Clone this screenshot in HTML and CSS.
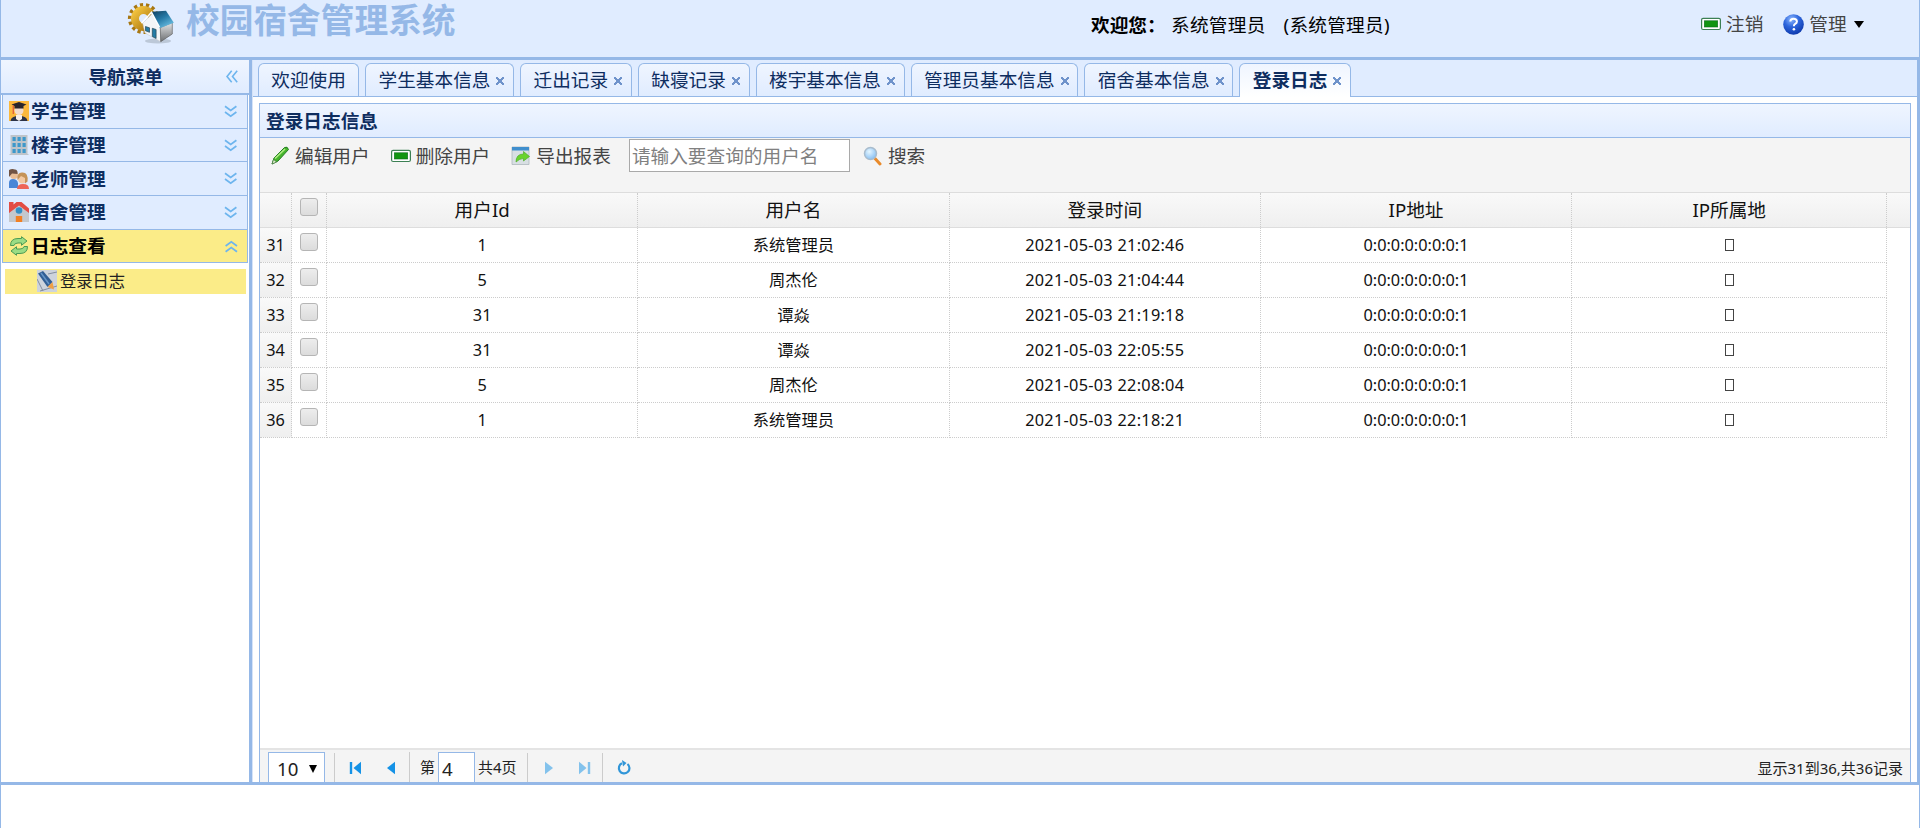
FILE: index.html
```html
<!DOCTYPE html>
<html lang="zh-CN">
<head>
<meta charset="utf-8">
<title>校园宿舍管理系统</title>
<link rel="stylesheet" href="styles.css">
</head>
<body>
<svg width="0" height="0" class="defs">
  <defs>
    <linearGradient id="gold" x1="0" y1="0" x2="1" y2="1"><stop offset="0" stop-color="#f3c43f"/><stop offset="1" stop-color="#a8730c"/></linearGradient>
    <linearGradient id="roof" x1="0" y1="0" x2=".7" y2="1"><stop offset="0" stop-color="#123e5c"/><stop offset=".5" stop-color="#2578a5"/><stop offset="1" stop-color="#6cc0e4"/></linearGradient>
    <linearGradient id="wall" x1="0" y1="0" x2="0" y2="1"><stop offset="0" stop-color="#e4e6e8"/><stop offset="1" stop-color="#6d6f72"/></linearGradient>
    <radialGradient id="ball" cx=".4" cy=".25" r=".8"><stop offset="0" stop-color="#8db8ff"/><stop offset=".45" stop-color="#2e66dc"/><stop offset="1" stop-color="#0a35a8"/></radialGradient>
    <radialGradient id="lens" cx=".4" cy=".35" r=".7"><stop offset="0" stop-color="#e5f6ff"/><stop offset="1" stop-color="#83bdf3"/></radialGradient>
    <g id="chev" fill="none" stroke="#6db5ee" stroke-width="1.7"><path d="M1 1.2l5.7 4.3 5.7-4.3M1 7l5.7 4.3L12.400 7"/></g>
    <g id="minus"><rect x=".6" y="4.300" width="18.800" height="11.200" rx="1.500" fill="#fff" stroke="#3c8054" stroke-width="1.200"/><rect x="3.300" y="6.800" width="13.400" height="6.200" fill="#119511" stroke="#0b6d20" stroke-width=".6"/></g>
  </defs>
</svg>
<div class="app">
  <header class="top">
    <svg class="logo" viewBox="0 0 48 44">
      <circle cx="17.500" cy="17.500" r="13.800" fill="none" stroke="#a87712" stroke-width="3.600" stroke-dasharray="3.200 2.900"/>
      <circle cx="17.500" cy="17.500" r="8.500" fill="none" stroke="url(#gold)" stroke-width="8"/>
      <ellipse cx="32" cy="40" rx="13" ry="2.500" fill="#bcc8d8"/>
      <path d="M16.700 22.300L26 13l8.500 13.500.2 14.200L19 32z" fill="#f3f5f7" stroke="#c2c6cb" stroke-width=".5"/>
      <path d="M34.300 26.500l12-5V33l-11.600 7.700z" fill="url(#wall)" stroke="#555" stroke-width=".6"/>
      <path d="M25.500 10.700L40 9.700l7.800 12-14.300 5.500z" fill="url(#roof)"/>
      <path d="M15.500 22.300l10-11 8 15" stroke="#fff" stroke-width="1.500" fill="none"/>
      <path d="M19.500 25.500l4 1.300v4.500l-4-1.500zM26.300 27.300l3.800 1.200v9l-3.800-2z" fill="#247ba5" stroke="#274858" stroke-width=".7"/>
    </svg>
    <h1>校园宿舍管理系统</h1>
    <div class="hello"><b>欢迎您：</b><span>系统管理员</span><span>(系统管理员)</span></div>
    <div class="account">
      <svg width="20" height="20"><use href="#minus"/></svg><span class="logout">注销</span>
      <svg width="21" height="21" viewBox="0 0 21 21"><circle cx="10.500" cy="10.500" r="10.300" fill="url(#ball)"/><path d="M7.300 7.500q.2-2.700 3.300-2.700t3.300 2.600q0 1.500-1.700 2.500-1.300.8-1.300 2.300" fill="none" stroke="#fff" stroke-width="2"/><circle cx="10.900" cy="15.300" r="1.300" fill="#fff"/></svg><span>管理</span>
      <i class="caret"></i>
    </div>
  </header>
  <div class="main">
    <aside class="side">
      <div class="side-title">导航菜单<svg class="fold" width="12" height="13"><path d="M5.700 .7L1 6.500l4.700 5.800M11.200 .7L6.500 6.500l4.700 5.800" fill="none" stroke="#6db5ee" stroke-width="1.600"/></svg></div>
      <nav class="accordion">
        <div class="acc"><svg class="ic" viewBox="0 0 20 20"><rect width="20" height="20" fill="#fbb83c"/><path d="M1.500 20q.5-5 8.500-5t8.500 5z" fill="#2b3247"/><path d="M7 14h6v4l-3 2-3-2z" fill="#f6efe9"/><circle cx="10" cy="9.500" r="4.500" fill="#f2dccd"/><path d="M2.500 3.500L10 1l7.500 2.500-3 1.500v2.500h-9V5z" fill="#29252c"/><path d="M4.300 4.500V13" stroke="#e25c3a" stroke-width="1.300"/></svg>学生管理<svg class="chev" width="14" height="13"><use href="#chev"/></svg></div>
        <div class="acc"><svg class="ic" viewBox="0 0 20 20"><path d="M1.500 0h17v19h1v1H.5v-1h1z" fill="#bec4ca"/><path d="M3.500 2h3.200v4H3.500zm5 0h3.200v4H8.500zm5 0h3.200v4h-3.200zM3.500 8h3.200v4H3.500zm5 0h3.200v4H8.500zm5 0h3.200v4h-3.200zM3.500 14h3.200v4H3.500zm5 0h3.200v4H8.500zm5 0h3.200v4h-3.200z" fill="#3d98cb"/></svg>楼宇管理<svg class="chev" width="14" height="13"><use href="#chev"/></svg></div>
        <div class="acc"><svg class="ic" viewBox="0 0 20 20"><path d="M0 19v-5q0-4 4-4t5 4v5z" fill="#4a86d6"/><circle cx="5" cy="6" r="4" fill="#e9bd95"/><path d="M0 8V1q3-1.500 6-.5 3 .5 2.500 4.500L3 4.500z" fill="#705343"/><path d="M8 20q0-5 6-5t6 5z" fill="#ee6557"/><circle cx="13.500" cy="10" r="4.500" fill="#f3c9a2"/><path d="M8.500 11q-1-8 5-7.500 6 0 5 9l-2.500 2V9l-4-2z" fill="#c59358"/></svg>老师管理<svg class="chev" width="14" height="13"><use href="#chev"/></svg></div>
        <div class="acc"><svg class="ic" viewBox="0 0 20 20"><path d="M0 20V8l10-7 10 7v12z" fill="#c3c8cd"/><path d="M0 0h4.500v2.500L7.500 0h5L20 6.500v4.500L10 3.500 0 11z" fill="#e34c43"/><circle cx="10" cy="8.500" r="3.300" fill="#348ec4"/><path d="M6.800 14h6.400v6H6.800z" fill="#f28023"/></svg>宿舍管理<svg class="chev" width="14" height="13"><use href="#chev"/></svg></div>
        <div class="acc on"><svg class="ic" viewBox="0 0 20 20"><g fill="#9adc84" stroke="#4b9b54" stroke-width="1"><path d="M1.500 9.500q0-7 7.500-7h3.500V.7L18 5l-5.500 4.300V7H9Q5.500 7 5 9.500z"/><path d="M18.500 10.500q0 7-7.500 7H7.500v1.800L2 15l5.500-4.300V13H11q3.500 0 4-2.500z"/></g></svg>日志查看<svg class="chev up" width="14" height="13"><use href="#chev"/></svg></div>
      </nav>
      <div class="leaf"><svg width="20" height="22" viewBox="0 0 20 22"><path d="M0 0h20v22H0z" fill="#cdd3dc"/><path d="M0 9l6 12M11 4l9-2M3 21l17-5" stroke="#848e9f"/><path d="M1 3.500L6 1l9.500 11-5 5z" fill="#315e94"/><path d="M4 3l8 11" stroke="#6695c7" stroke-width="1.500"/><path d="M10.500 17l5-5 1.500 7.500z" fill="#f0a044"/></svg>登录日志</div>
    </aside>
    <section class="content">
      <div class="tabs">
        <div class="tab">欢迎使用</div>
        <div class="tab x">学生基本信息<i></i></div>
        <div class="tab x">迁出记录<i></i></div>
        <div class="tab x">缺寝记录<i></i></div>
        <div class="tab x">楼宇基本信息<i></i></div>
        <div class="tab x">管理员基本信息<i></i></div>
        <div class="tab x">宿舍基本信息<i></i></div>
        <div class="tab x sel">登录日志<i></i></div>
      </div>
      <div class="panel">
        <div class="panel-title">登录日志信息</div>
        <div class="tools">
          <span class="tool"><svg width="20" height="20" viewBox="0 0 20 20"><path d="M2 18l2-6L14.500 1.500q3-1.500 4 2L8 15z" fill="#45b42c" stroke="#247d23"/><path d="M5 12.500L15 3" stroke="#b0ec83" stroke-width="1.600"/><path d="M2 18l1.600-4.500L6.500 16z" fill="#deeccd" stroke="#3d6e35" stroke-width=".6"/></svg>编辑用户</span>
          <span class="tool"><svg width="20" height="20"><use href="#minus"/></svg>删除用户</span>
          <span class="tool"><svg width="20" height="20" viewBox="0 0 20 20"><path d="M1 1h17v17.500H1z" fill="#d8dfe3" stroke="#aeb8be" stroke-width=".8"/><path d="M1 1h17v3.500H1z" fill="#3f8ecd"/><path d="M5 16q0-8 7.500-8V5.500l6 5-6 4.500v-2.500q-4 0-7.500 3.500z" fill="#68d32c" stroke="#4fae2b" stroke-width=".7"/></svg>导出报表</span>
          <input class="query" placeholder="请输入要查询的用户名">
          <span class="tool find"><svg width="20" height="20" viewBox="0 0 20 20"><path d="M12 12.500l5 5.500" stroke="#e98a2a" stroke-width="3" stroke-linecap="round"/><circle cx="7.500" cy="7.500" r="6" fill="url(#lens)" stroke="#a9bccd" stroke-width="1.500"/></svg>搜索</span>
        </div>
        <div class="grid">
          <div class="row head"><div class="no"></div><div><i class="box"></i></div><div>用户Id</div><div>用户名</div><div>登录时间</div><div>IP地址</div><div>IP所属地</div></div>
          <div class="row"><div class="no">31</div><div><i class="box"></i></div><div>1</div><div>系统管理员</div><div class="time">2021-05-03 21:02:46</div><div>0:0:0:0:0:0:0:1</div><div><i class="tofu"></i></div></div>
          <div class="row"><div class="no">32</div><div><i class="box"></i></div><div>5</div><div>周杰伦</div><div class="time">2021-05-03 21:04:44</div><div>0:0:0:0:0:0:0:1</div><div><i class="tofu"></i></div></div>
          <div class="row"><div class="no">33</div><div><i class="box"></i></div><div>31</div><div>谭焱</div><div class="time">2021-05-03 21:19:18</div><div>0:0:0:0:0:0:0:1</div><div><i class="tofu"></i></div></div>
          <div class="row"><div class="no">34</div><div><i class="box"></i></div><div>31</div><div>谭焱</div><div class="time">2021-05-03 22:05:55</div><div>0:0:0:0:0:0:0:1</div><div><i class="tofu"></i></div></div>
          <div class="row"><div class="no">35</div><div><i class="box"></i></div><div>5</div><div>周杰伦</div><div class="time">2021-05-03 22:08:04</div><div>0:0:0:0:0:0:0:1</div><div><i class="tofu"></i></div></div>
          <div class="row"><div class="no">36</div><div><i class="box"></i></div><div>1</div><div>系统管理员</div><div class="time">2021-05-03 22:18:21</div><div>0:0:0:0:0:0:0:1</div><div><i class="tofu"></i></div></div>
        </div>
        <div class="pager">
          <div class="size">10<i></i></div>
          <div class="btns"><svg width="14" height="14"><path d="M2 1v12" stroke="#1592e6" stroke-width="2.400"/><path d="M12 .7v12.600L4.500 7z" fill="#1592e6"/></svg><svg width="14" height="14"><path d="M11 .7v12.600L3 7z" fill="#1592e6"/></svg></div>
          <div class="page">第<b>4</b>共4页</div>
          <div class="btns dim"><svg width="14" height="14"><path d="M3 .7v12.600L11 7z" fill="#1592e6"/></svg><svg width="14" height="14"><path d="M12 1v12" stroke="#1592e6" stroke-width="2.400"/><path d="M2 .7v12.600L9.500 7z" fill="#1592e6"/></svg></div>
          <div class="btns one"><svg width="14" height="15" viewBox="0 0 14 15"><path d="M10.500 4A5.300 5.300 0 1 1 5 3.300" fill="none" stroke="#3196d8" stroke-width="2.200"/><path d="M5 0l4.500 3L6 6.500z" fill="#3196d8"/></svg></div>
          <div class="total">显示31到36,共36记录</div>
        </div>
      </div>
    </section>
  </div>
  <footer class="foot"></footer>
</div>
</body>
</html>
```
FILE: styles.css
```css
* { box-sizing: border-box; }
body { margin: 0; height: 828px; overflow: hidden; background: #fff; font: 18.67px/24px "Noto Sans", "Noto Sans CJK SC", sans-serif; color: #0e2d5f; }
svg { flex: none; display: block; }
.defs { position: absolute; }
.app { height: 828px; display: flex; flex-direction: column; }
.top { height: 60px; flex: none; display: flex; background: #e0ecff; border: solid #95b8e7; border-width: 0 1px 3px; }
.logo { width: 48px; height: 44px; margin: 1px 0 0 125px; }
.top h1 { margin: 0 0 0 12px; font-size: 33.7px; line-height: 40px; font-weight: 700; color: #95b8e7; width: 905px; }
.hello { color: #000; display: flex; margin-top: 13px; white-space: nowrap; width: 610px; }
.hello b { width: 80px; }
.hello span { margin-right: 18px; letter-spacing: .25px; }
.account { display: flex; align-items: center; height: 24px; margin-top: 12px; color: #444; white-space: nowrap; }
.account svg + span { margin-left: 5px; }
.logout { margin-right: 20px; }
.caret { border: 5.500px solid transparent; border-top: 7px solid #000; border-bottom: 0; margin-left: 7px; }
.main { height: 725px; flex: none; display: flex; background: #95b8e7; padding: 0 3px 3px 0; }
.side { width: 250px; border: 1px solid #95b8e7; border-width: 0 1px; background: #fff; }
.side-title { height: 35px; border-bottom: 2px solid #95b8e7; background: linear-gradient(#eff5ff, #e0ecff); font-weight: 700; display: flex; align-items: center; justify-content: flex-end; padding: 0 11px 0 0; }
.fold { margin-left: 63px; }
.accordion { padding: 0 1px; }
.acc { height: 33.700px; border: 1px solid #95b8e7; border-top: 0; background: #e0ecff; display: flex; align-items: center; padding: 0 9px 0 6px; font-weight: 700; color: #0e2d5f; }
.acc.on { background: #fbec88; color: #000; }
.ic { width: 20px; height: 20px; margin-right: 2px; }
.chev { margin-left: auto; }
.up { transform: rotate(180deg); }
.leaf { margin: 5.500px 3px 0 4px; height: 25px; background: #fbec88; display: flex; align-items: center; padding-left: 32px; font-size: 16.300px; color: #222; }
.leaf svg { margin-right: 3px; }
.content { margin-left: 2px; flex: 1; min-width: 0; background: #fff; display: flex; flex-direction: column; border-left: 1px solid #d5e3f8; }
.tabs { height: 37px; flex: none; background: #e0ecff; display: flex; align-items: flex-end; gap: 6px; padding-left: 5px; border-bottom: 1px solid #95b8e7; }
.tab { height: 33px; border: 1px solid #95b8e7; border-bottom: 0; border-radius: 6px 6px 0 0; background: linear-gradient(#eff5ff, #e0ecff); padding: 0 12.300px 0 12.300px; line-height: 32px; display: flex; white-space: nowrap; }
.tab.x { padding-right: 8.800px; }
.tab.sel { background: linear-gradient(#eff5ff, #fff); font-weight: 700; height: 34px; margin-bottom: -1px; }
.tab i { width: 8px; height: 8px; margin: 13px 0 0 6px; background: linear-gradient(45deg, transparent 43%, #6f93cb 43% 57%, transparent 57%), linear-gradient(-45deg, transparent 43%, #6f93cb 43% 57%, transparent 57%); }
.panel { margin: 6px 6px 0 6px; flex: 1; min-height: 0; border: 1px solid #95b8e7; border-bottom: 0; display: flex; flex-direction: column; }
.panel-title { height: 34px; flex: none; border-bottom: 1px solid #95b8e7; background: linear-gradient(#eff5ff, #e0ecff); font-weight: 700; line-height: 34px; padding-left: 6px; }
.tools { height: 55px; flex: none; background: #f4f4f4; border-bottom: 1px solid #ddd; display: flex; align-items: flex-start; padding: 1px 0 0 10px; color: #444; white-space: nowrap; }
.tool { display: flex; align-items: center; height: 34px; gap: 5px; margin-right: 21px; }
.query { width: 221px; height: 33px; border: 1px solid #a9a9a9; outline: 0; font: inherit; padding: 0 2px; margin: 0 13px 0 -3px; }
.query::placeholder { color: #808080; opacity: 1; }
.grid { flex: 1; color: #111; font-size: 16.300px; }
.row { display: grid; grid-template-columns: 32px 35px 311.300px 311.300px 311.300px 311.300px 315px; height: 35px; width: 1627.200px; }
.row > div { border: 1px dotted #ccc; border-width: 0 1px 1px 0; display: flex; align-items: center; justify-content: center; white-space: nowrap; }
.row .no, .head { background: linear-gradient(#f9f9f9, #efefef); }
.row > .time { letter-spacing: .28px; }
.head { width: auto; font-size: 18.670px; border-bottom: 1px solid #ddd; }
.head > div { border-bottom: 0; }
.head > .no { background: none; }
.box { width: 18px; height: 18px; margin-bottom: 6px; border: 1.500px solid #b5b5b5; border-radius: 3px; background: linear-gradient(#ededed, #dcdcdc); }
.tofu { width: 9px; height: 12px; border: 1px solid #444; }
.pager { height: 34px; flex: none; background: #f4f4f4; border-top: 2px solid #e4e4e4; display: flex; color: #222; font-size: 15px; }
.size { width: 57px; margin: 2px 9px 0 8px; border: 1px solid #95b8e7; border-bottom: 0; background: #fff; font-size: 18.670px; display: flex; align-items: center; padding: 2px 0 0 8px; }
.size i { border: 4px solid transparent; border-top: 8px solid #000; border-bottom: 0; margin-left: 11px; }
.btns { width: 75px; margin-top: 3px; border-left: 1px solid #ccc; display: flex; align-items: center; gap: 21px; padding-left: 14px; }
.dim svg { opacity: .5; }
.page { width: 118px; margin-top: 2px; border-left: 1px solid #ccc; display: flex; align-items: center; padding-left: 10px; white-space: nowrap; }
.page b { align-self: stretch; width: 37px; margin: 0 3px 0 3px; border: 1px solid #95b8e7; border-bottom: 0; background: #fff; font-weight: 400; font-size: 18.670px; line-height: 31px; padding-left: 3px; }
.total { margin: 6px 7px 0 auto; white-space: nowrap; }
.foot { flex: 1; border: solid #95b8e7; border-width: 0 1px; }
```
